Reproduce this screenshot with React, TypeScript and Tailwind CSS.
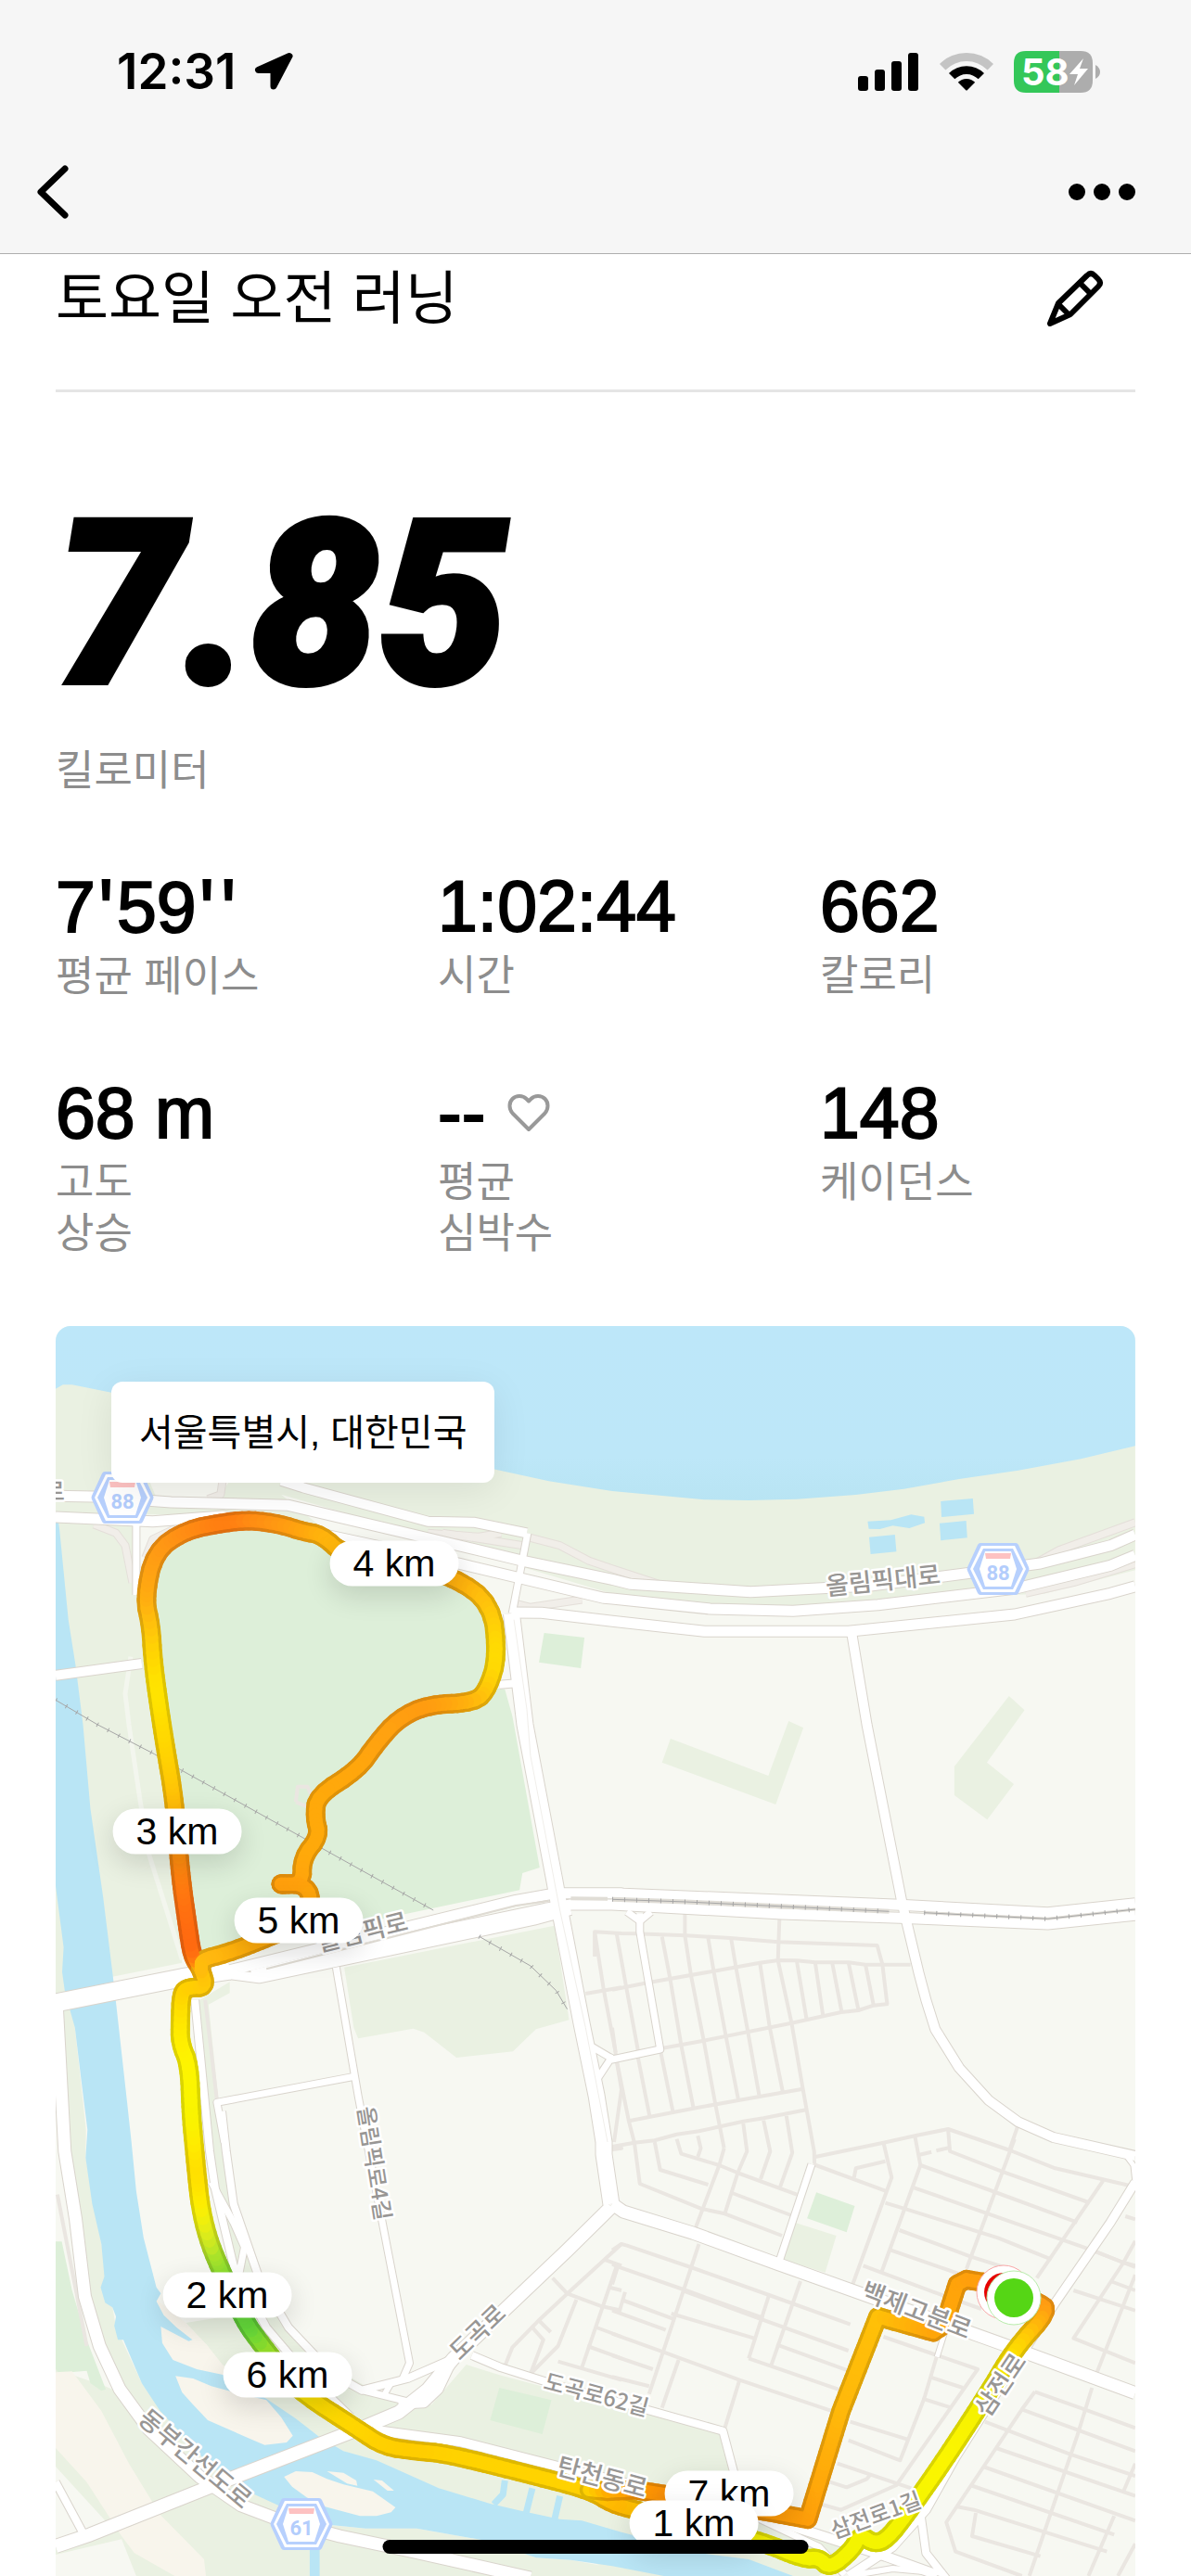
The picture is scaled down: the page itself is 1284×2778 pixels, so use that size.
import React from "react";

const FONT_KR = "font-['Liberation_Sans','Noto_Sans_CJK_KR',sans-serif]";

/* ---------- map projection ---------- */

type Tile = { x: number; y: number; kx: number };

const TILES: Record<string, Tile> = {
  a: { x: 50, y: 1420, kx: 620 / 1568 },
  b: { x: 660, y: 1420, kx: 624 / 1568 },
  c: { x: 50, y: 1860, kx: 620 / 1568 },
  d: { x: 660, y: 1860, kx: 624 / 1568 },
  e: { x: 50, y: 2310, kx: 620 / 1568 },
  f: { x: 660, y: 2310, kx: 624 / 1568 },
};

type Pt = { x: number; y: number; color: number[] };

const rgb = (c = "#000000") => [1, 3, 5].map((i) => parseInt(c.slice(i, i + 2), 16));

/** Reads "a 10,20 30,40 b 5,6:#ff0000": a letter picks the tile, the rest are tile coordinates. */
function project(src: string): Pt[] {
  let tile = TILES.a;
  const out: Pt[] = [];
  for (const token of src.trim().split(/\s+/)) {
    if (TILES[token]) {
      tile = TILES[token];
      continue;
    }
    const [pos, color] = token.split(":");
    const [x, y] = pos.split(",").map(Number);
    out.push({ x: tile.x + x * tile.kx, y: tile.y + y / 3, color: rgb(color) });
  }
  return out;
}

const toPoints = (src: string) =>
  project(src)
    .map((p) => `${p.x.toFixed(1)},${p.y.toFixed(1)}`)
    .join(" ");

/* ---------- map data ---------- */

const GRASS = "#eaf1e2";
const WOOD = "#ddefd9";
const LAND = "#f7f8f2";
const WATER = "#b9e5f5";
const SAND = "#f8f5ec";

const AREAS: [string, string][] = [
  [GRASS, "a 25,200 1543,500 b 1417,400 1417,820 1170,896 1080,900 490,968 265,960 0,930 a 1400,890 1130,820 760,710 500,640 25,640"],
  [LAND, "a 280,530 500,530 470,585 300,585"],
  [LAND, "a 640,575 860,650 1000,705 1568,905 1568,950 1250,950 1100,830 760,690"],
  ["url(#river)", "a 25,30 b 1417,30 1417,418 1270,460 1100,497 940,525 790,557 660,576 500,590 370,594 250,592 0,564 a 1510,558 1370,532 1216,492 900,410 500,320 177,245 70,220 45,220 25,233"],
  [GRASS, "a 25,640 240,680 245,900 300,1100 c 290,0 330,300 370,770 180,815 25,875"],
  [WOOD, "a 290,900 310,780 400,700 540,680 700,700 820,770 1100,850 1210,950 1235,1100 1210,1200 1250,1205 1270,1290 c 1275,0 1345,462 1298,480 1290,535 980,612 420,750 380,740 350,420 290,0 a 300,1060"],
  [WOOD, "a 1357,1023 1467,1038 1457,1137 1343,1118"],
  [GRASS, "b 478,1308 518,1330 d 443,258 135,122 158,45 423,165"],
  [GRASS, "b 1075,1227 1117,1273 d 1015,122 1088,192 1016,307 927,228 927,135"],
  [GRASS, "c 812,785 1385,650 1400,760 1425,955 1335,985 1272,1057 1118,1077 1030,995 1000,983 850,1015 838,980"],
  [GRASS, "c 405,900 500,832 500,868 442,905 470,1225 485,1400 440,1400"],
  [GRASS, "e 440,0 490,0 530,250 600,500 740,700 900,810 870,860 760,810 560,560 470,200"],
  [GRASS, "c 30,900 70,920 78,980 108,1310 e 107,50 150,330 190,600 260,780 380,960 320,960 200,790 120,600 60,100 c 50,1380"],
  [GRASS, "e 25,735 160,790 310,870 440,1040 640,1180 780,1240 870,1250 1010,1250 1200,1290 1335,1345 1430,1352 1568,1382 f 160,1404 e 25,1404"],
  [WOOD, "e 25,322 42,322 70,480 110,640 162,800 150,805 120,780 110,740 35,748 25,735"],
  [SAND, "e 25,745 70,742 150,870 225,1040 310,1205 430,1350 435,1404 350,1404 240,1330 205,1275 110,1100 25,990"],
  [LAND, "e 25,1050 160,1225 110,1260 25,1300"],
  [LAND, "e 25,1335 205,1285 245,1404 25,1404"],
  [GRASS, "e 380,585 510,560 630,680 740,800 860,805 960,840 1050,850 1145,720 1240,755 1350,790 1568,855 f 100,880 300,940 335,1070 440,1220 600,1290 632,1330 560,1404 e 1568,1404 1070,1120 810,1000 745,955 600,830 480,765 440,660"],
  [SAND, "e 300,510 380,585 440,660 480,720 620,850 480,790 320,720 290,600"],
  [WATER, "a 30,640 36,690 60,980 80,1130 100,1320 c 120,270 155,560 180,800 190,900 220,1220 232,1350 e 245,160 265,310 300,470 312,490 300,515 320,560 355,600 398,640 388,644 312,597 316,650 345,705 410,735 490,755 600,830 680,895 745,955 810,1000 900,1030 1070,1120 1210,1170 1300,1195 1400,1220 1460,1225 1568,1262 f 240,1330 370,1350 490,1404 140,1404 0,1372 e 1430,1352 1335,1345 1200,1290 1010,1250 870,1250 745,1235 745,1404 718,1404 718,1215 640,1180 530,1120 440,1040 380,960 310,870 260,780 210,640 195,640 185,595 190,565 180,535 160,520 148,470 158,435 150,330 125,200 107,50 c 112,1310 95,1150 78,980 66,930 50,860 43,800 47,720 25,520 a 25,640"],
  [SAND, "e 352,757 400,765 450,790 520,812 600,835 640,890 672,950 655,972 595,980 555,960 440,900 400,850 370,810"],
  [SAND, "e 648,1083 680,1065 725,1068 765,1090 810,1108 890,1130 952,1182 940,1198 900,1210 855,1210 760,1180 710,1150 670,1115"],
  [SAND, "e 765,1065 810,1070 845,1095 848,1112 820,1105"],
  [SAND, "e 892,1092 915,1095 948,1128 930,1128"],
  [WOOD, "e 1235,795 1377,835 1352,945 1210,900"],
  [WOOD, "f 553,163 657,207 635,292 528,247"],
  [GRASS, "f 498,262 607,303 577,422 462,380"],
  [WATER, "b 890,597 977,588 980,638 892,648"],
  [WATER, "b 887,668 959,660 962,715 890,724"],
  [WATER, "b 696,713 766,705 770,760 700,768"],
  [WATER, "b 692,662 755,658 810,640 845,647 847,667 805,684 760,676 725,687 695,686"],
];

const STREETS = [
  "c 1470,870 1568,850",
  "c 1495,750 1495,670 1568,675 d 65,676 200,682 320,690 450,703 718,714 732,775 745,905",
  "c 1495,670 1520,860 1552,1060",
  "c 1555,1090 1568,1180 f 5,0",
  "c 1540,1375 1568,1370 d 0,1365 60,1352 115,1345 175,1325 235,1315 292,1300 355,1283 410,1273 528,1245",
  "d 12,676 38,848 70,1055",
  "d 0,980 10,1070",
  "d 135,685 157,822 187,1037 220,1240",
  "d 197,612 197,682 213,808 248,1022 280,1230 303,1370",
  "d 260,690 275,797 308,1008 342,1215",
  "d 322,690 335,783 368,995 398,1198",
  "d 400,770 427,980 462,1188",
  "d 453,630 449,762 486,965 517,1180 547,1380 f 548,70",
  "d 500,765 527,955",
  "d 550,770 571,940",
  "d 596,770 622,930",
  "d 640,768 667,922",
  "d 686,775 708,908",
  "d 0,857 95,835 275,797 400,770 450,762 500,763 550,769 640,769 686,776 808,776",
  "d 130,1048 248,1022 486,965 620,930 667,924 708,908 748,903",
  "d 45,1282 220,1241 342,1215 517,1178",
  "d 130,1050 165,1255",
  "d 70,1078 102,1270",
  "d 13,1092 45,1282 60,1352 f 75,135 240,215 305,232 460,303",
  "f 115,0 130,90 260,138",
  "f 175,-10 187,38 290,75 345,102 500,170",
  "f 232,-20 240,20 232,48",
  "f 303,20 290,75 222,290",
  "f 355,-60 365,30 340,100 305,232",
  "f 410,-70 428,30 402,120",
  "f 472,-85 488,35 455,145",
  "f 545,72 745,160",
  "f 550,48 735,2 820,-20 910,-42 1078,27 1200,85 1410,143",
  "f 325,165 485,237",
  "f 655,115 660,85 740,62",
  "f 735,2 757,115 650,465",
  "f 820,-20 835,75 730,420",
  "f 835,75 1010,150 1260,260",
  "f 818,148 1300,350 1417,405",
  "f 740,197 790,215 1045,310 1190,380",
  "f 778,285 970,370 1075,410",
  "f 755,350 960,435",
  "f 680,400 870,485 1000,540",
  "f 910,-42 915,30 1055,95 1290,195",
  "f 830,42 865,32",
  "f 878,28 915,18",
  "f 1090,-10 960,410",
  "f 1330,125 1150,440",
  "d 1098,1300 1076,1377",
  "f 1390,240 1417,250",
  "f 1417,320 1385,390 1250,635 1417,715",
  "f 1300,350 1385,390 1417,400",
  "f 1417,430 1310,755",
  "f 1250,480 1417,545",
  "f 1350,450 1417,480",
  "f 0,350 25,330 40,335 220,408 425,495 645,590",
  "f 0,395 15,403 200,480 410,570",
  "f 25,510 165,572",
  "f 0,545 145,608",
  "f 0,620 140,680 345,770 620,880",
  "f 160,555 385,635",
  "f 190,480 385,565 640,675",
  "f 235,330 100,815",
  "f 510,450 430,725",
  "f 425,495 370,700",
  "f 445,655 640,740",
  "f 370,700 430,725 625,805",
  "f 180,705 135,860",
  "f 345,770 305,925",
  "f 0,690 110,735",
  "f 0,760 100,790",
  "f 15,403 0,460",
  "f 35,485 20,545",
  "f 735,630 880,690 990,735 770,1110 620,1190 560,1170",
  "f 880,690 845,830 780,1030 640,965",
  "f 645,905 800,962",
  "f 860,760 950,795",
  "f 840,830 920,860",
  "f 610,1040 810,1120",
  "f 590,1100 635,1117 690,1090 700,1075",
  "f 1145,808 1110,865 1040,990 905,1230 930,1325 1110,1404",
  "f 1145,808 1280,865 1417,925",
  "f 1110,865 1417,1000",
  "f 1010,905 1240,1010 1417,1080",
  "f 1040,990 1417,1145",
  "f 1005,1050 1417,1225",
  "f 970,1110 1360,1270",
  "f 935,1180 980,1190 1340,1325",
  "f 985,1200 975,1275 1160,1340",
  "f 1300,795 1260,950 1130,1404",
  "f 1417,1040 1385,1130",
  "f 1360,1210 1290,1404",
  "f 1417,1300 1370,1404",
  "e 1568,330 1430,480 1340,580 1270,665 1250,725",
  "e 1380,440 1420,490 1510,530 1568,545",
  "e 1445,510 1395,660 1320,750",
  "e 1520,380 1568,400",
  "e 1555,400 1460,730",
  "e 1395,710 1568,770",
  "e 1475,660 1568,700",
  "e 1500,600 1568,630",
  "e 1535,470 1568,480",
  "e 1325,600 1355,640 1320,750",
  "e 1345,580 1375,615",
  "c 680,250 685,200 712,200 725,235",
  "c 680,250 712,265",
  "c 433,890 465,1215",
  "e 30,170 110,660",
];

const RAMPS = [
  "a 1040,700 1180,712 1240,700",
  "a 1080,700 1300,740",
  "a 1320,715 1400,740 1480,790 b 0,815 140,870",
  "a 130,672 190,700 215,740 235,860",
  "a 360,680 290,720 270,780",
  "a 480,535 475,575 440,590",
  "a 1270,925 1320,940 1460,915",
  "b 1417,665 1210,755 1150,795",
  "b 1417,800 1250,860 1120,895",
  "c 28,930 35,1100",
];

const ROADS: [number, string][] = [
  [7, "a 245,660 245,900"],
  [10, "a 25,1160 260,1122"],
  [8, "e 25,1100 100,1265"],
  [7, "c 790,785 850,1200 e 890,100 990,715 970,770"],
  [7, "e 485,0 c 465,1222 840,1138"],
  [8, "c 478,1250 490,1380 e 510,200 580,440 660,600 780,750 860,803 985,765 1110,700"],
  [7, "e 450,130 510,260 540,340 525,430"],
  [8, "c 405,890 445,1380 e 460,150 510,400 600,600 700,740 830,890"],
  [7, "e 860,803 980,838"],
  [6, "e 940,780 920,820"],
  [8, "e 1160,690 1240,730 1400,790 f 100,868 300,935 330,1070"],
  [10, "e 880,930 1130,970 1395,1050 f 90,1120 440,1225 610,1290 740,1340 880,1400"],
  [7, "f 400,1220 560,1310 630,1400"],
  [7, "f 540,72 450,395"],
  [5, "f 905,600 880,695"],
  [8, "f 835,1200 850,1330 910,1420"],
  [6, "f 640,1404 760,1380 900,1395"],
  [7, "d 40,605 75,635 105,605"],
  [7, "d 75,610 75,670 130,1050 0,1083 c 1540,1078 1500,1150"],
  [7, "c 1485,1040 1545,1082"],
  [13, "c 28,900 50,1380 e 80,250 105,500 145,660 200,800 280,930 420,1085 530,1175 640,1225 800,1275 1000,1325 1320,1410"],
  [14, "e 1540,210 1420,350 1110,700 1040,800 960,875 870,920 510,1085 120,1270 25,1308"],
  [9, "e 1110,700 1070,800 1030,845 960,850"],
  [13, "f 0,200 30,225 220,295 450,395 650,480 1060,655 1417,812"],
  [9, "f 1417,130 1350,260 1200,520 1010,870 930,1020 850,1190 760,1310 640,1404"],
  [10, "b 648,1018 690,1320 d 690,0 785,575 830,800 850,890 875,985 940,1110 1020,1215 1100,1285 1195,1335 1417,1395"],
  [5, "f 1390,40 1412,75 1417,130"],
  [10, "a 640,530 700,553 1040,662 1165,665 1310,700"],
  [7, "a 1312,700 1270,960"],
  [8, "a 1235,1190 1290,1185"],
  [11, "a 1270,957 1350,958 1543,985 b 250,1018 640,1018 1090,963 1350,895 1417,872"],
  [11, "a 25,648 290,662 480,645 700,690 1130,800 1520,910 1543,912 b 265,945 490,952 720,932 1090,880 1350,805 1417,772"],
  [11, "a 25,580 130,582 340,600 660,610 1000,705 1300,790 1543,850 b 50,865 375,890 700,870 950,832 1160,798 1350,740 1417,705"],
  [19, "c 25,900 370,818 500,795"],
  [10, "c 450,800 580,820 1330,632 1430,600"],
  [11, "c 480,800 1280,568 1390,545 1568,545 d 0,545 780,583 1180,608 1417,578"],
  [11, "c 560,810 980,690 1360,595 1430,582 1568,582 d 0,582 460,612 780,625 1180,645 1417,616"],
  [17, "a 1268,960 1300,1270 c 1305,0 1385,500 1400,600 1460,970 1500,1200 1520,1350 e 1520,40 1540,200"],
];

const CREEKS = ["e 1250,1095 1245,1140 1220,1172", "e 1325,1120 1308,1200", "e 1400,1145 1385,1225"];

const RAILS = [
  "a 25,1240 140,1320 c 295,95 365,145 1055,600",
  "c 1180,685 1320,780 1390,860 1420,920",
  "d 0,565 200,573 750,604",
  "d 845,608 1180,628 1417,597",
];

const RUN =
  "f 1090,500:#ff9c12 1150,515:#ff9c12 1185,545:#ff9c12 1090,670:#ffe000 1020,810:#f2ef00 900,1030:#fdf600 800,1200:#f4f400 745,1285:#f4f400 710,1300:#f4f400 672,1270:#f4f400 650,1320:#f4f400 590,1380:#f4f400 560,1345:#f4f400 520,1350:#f4f400 400,1290:#f4f200 200,1230:#f4e000 60,1190:#ffc000 0,1170:#ffb400 e 1480,1125:#ffd000 1300,1070:#ffd400 1090,1008:#ffd200 1010,1000:#ffcc00 920,985:#ffcf00 850,930:#ffd400 700,815:#ffe000 650,750:#d0e820 590,660:#8de02c 540,580:#58da40 470,400:#8fdf30 440,310:#d8ea20 420,210:#fff200 410,100:#ffdc00 402,0:#ffec00 c 395,1260:#f8f500 390,1100:#fdf500 365,1030:#fff000 365,960:#ffe800 368,870:#ffd400 385,850:#ffd000 436,850:#ffca08 422,790:#ffc008 398,750:#ff6a10 385,650:#ff6a10 365,480:#ff7d10 350,250:#ffc008 320,40:#ffd800 a 300,1200:#ffe600 290,1100:#ffd800 285,1000:#ffc40c 268,910:#ffac10 295,760:#ff9c14 380,690:#ff8e14 490,665:#ff7a10 560,658:#ff8c14 640,672:#ff9a12 700,695:#ffa50e 750,705:#ffb30c 810,770:#ffb80c 970,800:#ffb00c 1110,840:#ffab0e 1215,930:#ffc40c 1230,1100:#ffe000 1205,1200:#ffcc08 1170,1248:#ffb80c 1040,1255:#ff9a10 960,1300:#ff9f10 c 900,60:#ffa310 850,145:#ffa60c 738,230:#ffa90a 732,300:#ffa90a 745,360:#ffa90a 698,430:#ffa90a 697,515:#ffa40c 640,515:#ff9f0c 640,516:#ff9f0c 700,515:#ffa00c 725,560:#ffa60a 700,640:#ffa60a 580,700:#ffa90a 490,740:#ffb40c 422,760:#ffb810 422,790:#ffbc0c";

const FINISH =
  "e 1480,1125:#ffd000 1530,1130:#ffae00 f 60,1125:#ff9a00 140,1140:#ff9408 440,1200:#ff9b08 530,1220:#ff9f0a 620,870:#ffb80a 720,565:#ffc008 870,615:#ffa50a 900,590:#ffa70a 935,460:#ffa30a 960,445:#ffa00c 1060,465:#ff9c0c";

const LABELS: [string, number, number, number, number][] = [
  ["올림픽대로", 952, 1705, -6, 27],
  ["올림픽로", 391, 2084, -14, 27],
  ["올림픽로4길", 404, 2333, 81, 24],
  ["도곡로", 515, 2515, -44, 26],
  ["도곡로62길", 643, 2582, 15, 24],
  ["백제고분로", 988, 2492, 21, 27],
  ["삼전로", 1079, 2572, -56, 27],
  ["삼전로1길", 944, 2712, -20, 24],
  ["탄천동로", 649, 2672, 15, 27],
  ["동부간선도로", 210, 2652, 40, 27],
  ["로", 58, 1609, 0, 26],
];

const SHIELDS: [string, number, number][] = [
  ["88", 132, 1615],
  ["88", 1076, 1692],
  ["61", 325, 2722],
];

const MARKERS: [string, number, number][] = [
  ["4 km", 425, 1686],
  ["3 km", 191, 1975],
  ["5 km", 322, 2071],
  ["2 km", 245, 2475],
  ["6 km", 310, 2561],
  ["7 km", 786, 2689],
  ["1 km", 748, 2721],
];

/* ---------- route ---------- */

const blend = (a: Pt, b: Pt, t: number): Pt => ({
  x: a.x + (b.x - a.x) * t,
  y: a.y + (b.y - a.y) * t,
  color: a.color.map((v, i) => v + (b.color[i] - v) * t),
});

/** Corner cutting: every inner corner becomes two points a quarter of the way along its legs. */
function smooth(pts: Pt[], rounds: number): Pt[] {
  let out = pts;
  for (let r = 0; r < rounds; r++) {
    const cut = out.slice(1).flatMap((p, i) => [blend(out[i], p, 0.25), blend(out[i], p, 0.75)]);
    out = [out[0], ...cut, out[out.length - 1]];
  }
  return out;
}

const paint = (c: number[], shade: number) => `rgb(${c.map((v) => Math.round(v * shade)).join(",")})`;

function Route({ src, rounds }: { src: string; rounds: number }) {
  const pts = smooth(project(src), rounds);
  const legs = pts.slice(1).flatMap((p, i) => {
    const n = Math.max(1, Math.round(Math.hypot(p.x - pts[i].x, p.y - pts[i].y) / 6));
    return Array.from({ length: n }, (_, k) => [blend(pts[i], p, k / n), blend(pts[i], p, (k + 1) / n)]);
  });
  return (
    <g strokeLinecap="round">
      {legs.map(([p, q], i) => (
        <line key={`o${i}`} x1={p.x} y1={p.y} x2={q.x} y2={q.y} stroke={paint(p.color, 0.87)} strokeWidth={21} />
      ))}
      {legs.map(([p, q], i) => (
        <line key={`i${i}`} x1={p.x} y1={p.y} x2={q.x} y2={q.y} stroke={paint(p.color, 1)} strokeWidth={14} />
      ))}
    </g>
  );
}

function Shield({ text, x, y }: { text: string; x: number; y: number }) {
  return (
    <g transform={`translate(${x} ${y})`}>
      <path d="M-19-28H19Q21-28 22-26L33-2Q34 0 33 2L22 26Q21 28 19 28H-19Q-21 28-22 26L-33 2Q-34 0-33-2L-22-26Q-21-28-19-28Z" fill="#b7d0fd" />
      <path d="M-18-25H18L30 0 18 25H-18L-30 0Z" fill="#fff" />
      <path d="M-16-22H16L27 0 16 22H-16L-27 0Z" fill="#b7d0fd" />
      <path d="M-14-19H14L20 0 14 19H-14L-20 0Z" fill="#fff" />
      <path d="M-14-17H14L13-11H-13Z" fill="#fdc2c2" />
      <text y="12" textAnchor="middle" fontSize="22" fontWeight="700" fill="#b3cdfc" fontFamily="Roboto, sans-serif">
        {text}
      </text>
    </g>
  );
}

function MapDrawing() {
  return (
    <svg viewBox="60 1430 1164 1348" className="block h-auto w-full" role="img" aria-label="러닝 경로 지도">
      <defs>
        <linearGradient id="river" gradientUnits="userSpaceOnUse" x1="700" y1="1430" x2="700" y2="1620">
          <stop offset="0" stopColor="#bde7f9" />
          <stop offset="0.75" stopColor="#bde7f8" />
          <stop offset="1" stopColor="#b8e4f3" />
        </linearGradient>
      </defs>
      <rect x="60" y="1430" width="1164" height="1348" fill={LAND} />
      {AREAS.map(([fill, p], i) => (
        <polygon key={i} points={toPoints(p)} fill={fill} />
      ))}
      <g fill="none" strokeLinejoin="round">
        {CREEKS.map((p) => (
          <polyline key={p} points={toPoints(p)} stroke={WATER} strokeWidth={7} />
        ))}
        <polyline points={toPoints("a 230,1100 215,1220 225,1320 c 255,240 280,420 370,760")} stroke="#f3f6ee" strokeWidth={5} />
        {STREETS.map((p) => (
          <polyline key={p} points={toPoints(p)} stroke="#eae6e1" strokeWidth={4} />
        ))}
        {RAMPS.map((p) => (
          <polyline key={p} points={toPoints(p)} stroke="#e4dfd9" strokeWidth={9} />
        ))}
        {RAMPS.map((p) => (
          <polyline key={p} points={toPoints(p)} stroke="#f1eee9" strokeWidth={7} />
        ))}
        {ROADS.map(([w, p]) => (
          <polyline key={p} points={toPoints(p)} stroke="#d9d4cc" strokeWidth={w + 2} />
        ))}
        {ROADS.map(([w, p]) => (
          <polyline key={p} points={toPoints(p)} stroke="#fff" strokeWidth={w} />
        ))}
        <polyline points={toPoints("c 600,790 1280,585 1370,570")} stroke="#dfdbd3" strokeWidth={2} />
        <polyline points={toPoints("c 1430,562 1530,563")} stroke="#e0ddd6" strokeWidth={4} />
        <polyline points={toPoints("d 0,565 200,573 750,604")} stroke="#e0ddd6" strokeWidth={5} />
        <polyline points={toPoints("d 845,608 1180,628 1417,597")} stroke="#e0ddd6" strokeWidth={3} />
        <polyline points={toPoints("a 1275,980 1310,1270 c 1320,100 1400,600 1470,980 1530,1350")} stroke="#f0eeea" strokeWidth={1} />
        {RAILS.map((p) => (
          <g key={p} stroke="#a6a6a6">
            <polyline points={toPoints(p)} strokeWidth={1} />
            <polyline points={toPoints(p)} strokeWidth={5} strokeDasharray="1 12" />
          </g>
        ))}
      </g>
      <Route src={RUN} rounds={2} />
      <Route src={FINISH} rounds={0} />
      <g fontFamily="'Noto Sans CJK KR', sans-serif" fontWeight="500" textAnchor="middle" fill="#989694" stroke="#fff" strokeWidth="5" strokeLinejoin="round" paintOrder="stroke">
        {LABELS.map(([text, x, y, turn, size]) => (
          <text key={text} transform={`translate(${x} ${y}) rotate(${turn})`} dy="9" fontSize={size}>
            {text}
          </text>
        ))}
      </g>
      {SHIELDS.map(([text, x, y]) => (
        <Shield key={`${x}`} text={text} x={x} y={y} />
      ))}
      <circle cx="1082" cy="2472" r="29" fill="#fff" stroke="#f8a8a8" strokeWidth="1" />
      <circle cx="1082" cy="2472" r="21" fill="#e60000" />
      <circle cx="1093" cy="2478" r="29" fill="#fff" stroke="#b9ecac" strokeWidth="1" />
      <circle cx="1093" cy="2478" r="21" fill="#55d615" />
    </svg>
  );
}

/* ---------- status bar icons ---------- */

const LocationArrow = () => (
  <svg width="43" height="43" viewBox="0 0 43 43" aria-hidden="true">
    <path d="M38 4.500 4.500 19.500H21V37Z" fill="#000" stroke="#000" strokeWidth="7" strokeLinejoin="round" />
  </svg>
);

const Signal = () => (
  <svg width="66" height="42" viewBox="0 0 66 42" aria-hidden="true">
    <rect x="0" y="26" width="11" height="16" rx="3" />
    <rect x="18" y="19" width="11" height="23" rx="3" />
    <rect x="36" y="10" width="11" height="32" rx="3" />
    <rect x="54" y="1" width="11" height="41" rx="3" />
  </svg>
);

const Wifi = () => (
  <svg width="58" height="42" viewBox="0 0 58 42" aria-hidden="true">
    <path d="M0 13A41 41 0 0 1 58 13L51.600 19.400A32 32 0 0 0 6.400 19.400Z" fill="#c4c4c4" />
    <path d="M10 23A27 27 0 0 1 48 23L41.700 29.300A18 18 0 0 0 16.300 29.300Z" />
    <path d="M19.800 32.800A13 13 0 0 1 38.200 32.800L30 41Q29 42 28 41Z" />
  </svg>
);

const Battery = () => (
  <svg width="94" height="45" viewBox="0 0 94 45" role="img" aria-label="배터리 58%" className="overflow-visible">
    <path d="M13 0H49V45H13Q0 45 0 32V13Q0 0 13 0Z" fill="#34c759" />
    <path d="M49 0H72Q85 0 85 13V32Q85 45 72 45H49Z" fill="#adadad" />
    <path d="M88 15Q93 18 93 22.500T88 30Z" fill="#adadad" />
    <text x="8" y="37" fontSize="40" fontWeight="700" fill="#fff" fontFamily="Inter, sans-serif">
      58
    </text>
    <path d="M75 8 60 25H69L65 37 80 19H71Z" fill="#fff" stroke="#adadad" strokeWidth="2" paintOrder="stroke" />
  </svg>
);

/* ---------- page ---------- */

type Stat = { value: string; label: string[]; heart?: boolean };

const STATS: Stat[] = [
  { value: "7'59''", label: ["평균 페이스"] },
  { value: "1:02:44", label: ["시간"] },
  { value: "662", label: ["칼로리"] },
  { value: "68 m", label: ["고도", "상승"] },
  { value: "--", label: ["평균", "심박수"], heart: true },
  { value: "148", label: ["케이던스"] },
];

function StatItem({ value, label, heart }: Stat) {
  return (
    <div className="flex flex-col-reverse justify-end gap-[10px]">
      <dt className="text-[45px] leading-[55px] text-[#8d8d8d]">
        {label.map((l) => (
          <span key={l} className="block">
            {l}
          </span>
        ))}
      </dt>
      <dd className="flex items-center gap-6 text-[77px] leading-[76px] [-webkit-text-stroke:2px_black]">
        <span>
          {value.split(/('+)/).map((part, i) =>
            part.startsWith("'") ? (
              <span key={i} className="font-['Inter',sans-serif]">
                {part}
              </span>
            ) : (
              part
            ),
          )}
        </span>
        {heart && (
          <svg width="46" height="42" viewBox="0 0 46 42" fill="none" stroke="#999" strokeWidth="4" strokeLinejoin="round" aria-hidden="true">
            <path d="M23 39 5.500 21.500C1.500 17 1.500 10 5.500 6S16.500 2 20.500 6L23 8.500 25.500 6C29.500 2 36.500 2 40.500 6S44.500 17 40.500 21.500Z" />
          </svg>
        )}
      </dd>
    </div>
  );
}

export default function App() {
  return (
    <div className={`bg-white text-black ${FONT_KR}`}>
      <header className="border-b border-[#aeaeae] bg-[#f6f6f6] pb-[13px]">
        <div className="flex h-[154px] items-center justify-between pr-[97px] pl-[126px]">
          <div className="flex items-center gap-5">
            <span className="font-['Inter',sans-serif] text-[53px] leading-none font-semibold">12:31</span>
            <LocationArrow />
          </div>
          <div className="flex items-center gap-[22px]">
            <Signal />
            <Wifi />
            <Battery />
          </div>
        </div>
        <nav className="flex h-[106px] items-center justify-between pr-[60px] pl-9">
          <button type="button" aria-label="뒤로">
            <svg width="42" height="60" viewBox="0 0 42 60" fill="none" stroke="#000" strokeWidth="7" strokeLinecap="round" strokeLinejoin="round">
              <path d="M34 5 8 30 34 55" />
            </svg>
          </button>
          <button type="button" aria-label="더 보기">
            <svg width="73" height="20" viewBox="0 0 73 20">
              <circle cx="10" cy="10" r="9" />
              <circle cx="37" cy="10" r="9" />
              <circle cx="64" cy="10" r="9" />
            </svg>
          </button>
        </nav>
      </header>

      <main className="px-[60px]">
        <div className="flex items-start justify-between border-b-3 border-[#e5e5e5] pr-[34px] pb-[49px]">
          <h1 className="text-[62px] leading-[97px]">토요일 오전 러닝</h1>
          <button type="button" aria-label="제목 편집" className="mt-4">
            <svg width="64" height="64" viewBox="0 0 64 64" fill="none" stroke="#000" strokeWidth="6" strokeLinejoin="round">
              <path d="M46 7Q50 3 54 7L58 11Q62 15 58 19L28 49 6 59 15 37Z" />
              <path d="M38 15 50 27M15 38 27 50" />
            </svg>
          </button>
        </div>

        <p className="mt-[89px] font-['Roboto',sans-serif] text-[246px] leading-[280px] font-black italic [-webkit-text-stroke:6px_black]">7.85</p>
        <p className="mt-3 text-[45px] leading-[55px] text-[#8d8d8d]">킬로미터</p>

        <dl className="mt-20 grid grid-cols-3 gap-x-[72px] gap-y-[81px]">
          {STATS.map((s) => (
            <StatItem key={s.label.join()} {...s} />
          ))}
        </dl>

        <section className="relative mt-18 overflow-hidden rounded-t-2xl" aria-label="지도">
          <MapDrawing />
          <div className="absolute top-[60px] left-[60px] rounded-xl bg-white px-[30px] pt-[2px] text-[40px] leading-[107px] whitespace-nowrap shadow-[0_8px_40px_rgba(0,0,0,0.08)]">
            서울특별시, 대한민국
          </div>
          {MARKERS.map(([text, x, y]) => (
            <span
              key={text}
              className="absolute -translate-x-1/2 -translate-y-1/2 rounded-full bg-white px-[25px] text-[41px] leading-[49px] whitespace-nowrap shadow-[0_10px_30px_rgba(0,0,0,0.14)]"
              style={{ left: `${((x - 60) / 1164) * 100}%`, top: `${((y - 1430) / 1348) * 100}%` }}
            >
              {text}
            </span>
          ))}
        </section>
      </main>

      <div className="fixed bottom-6 left-1/2 h-[15px] w-[459px] -translate-x-1/2 rounded-full bg-black" />
    </div>
  );
}
